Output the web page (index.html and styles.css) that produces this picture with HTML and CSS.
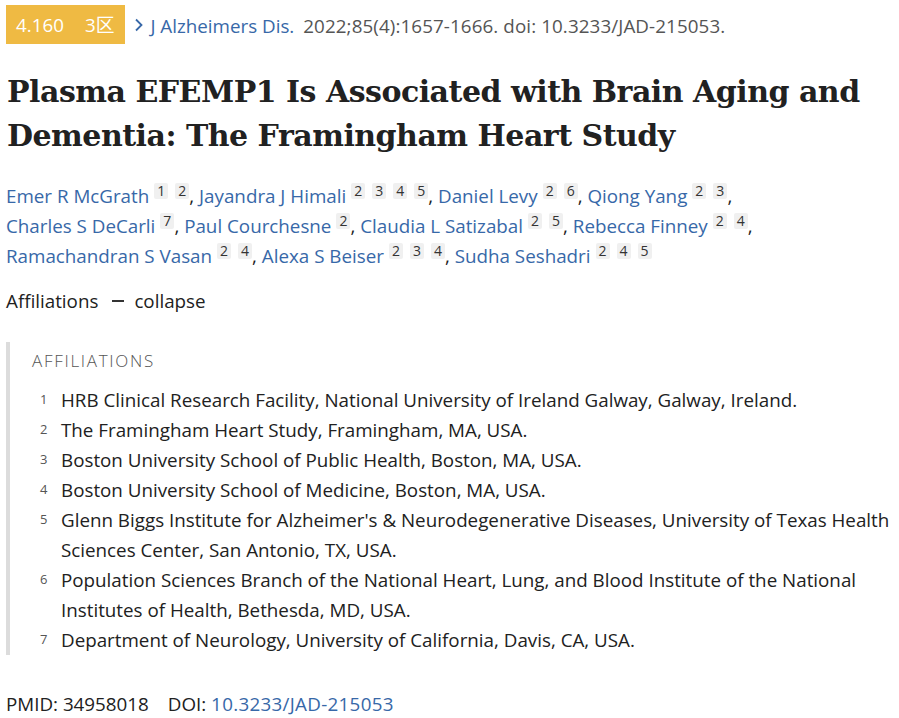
FILE: index.html
```html
<!DOCTYPE html>
<html lang="en">
<head>
<meta charset="utf-8">
<title>Plasma EFEMP1 Is Associated with Brain Aging and Dementia</title>
<link rel="stylesheet" href="styles.css">
</head>
<body>
<main class="article">
  <div class="cite-row">
    <span class="badge"><span>4.160</span><span class="zone">3区</span></span>
    <svg class="chev" width="10" height="16" viewBox="0 0 10 16"><path d="M2 2.5 L7.5 8 L2 13.5" fill="none" stroke="#3768a8" stroke-width="1.8"/></svg>
    <span class="journal">J Alzheimers Dis.</span>
    <span class="cite-meta">2022;85(4):1657-1666. doi: 10.3233/JAD-215053.</span>
  </div>

  <h1 class="title">Plasma EFEMP1 Is Associated with Brain Aging and Dementia: The Framingham Heart Study</h1>

  <div class="authors">
    <span class="author"><a class="name">Emer R McGrath</a><span class="ref">1</span><span class="ref">2</span>, </span>
    <span class="author"><a class="name">Jayandra J Himali</a><span class="ref">2</span><span class="ref">3</span><span class="ref">4</span><span class="ref">5</span>, </span>
    <span class="author"><a class="name">Daniel Levy</a><span class="ref">2</span><span class="ref">6</span>, </span>
    <span class="author"><a class="name">Qiong Yang</a><span class="ref">2</span><span class="ref">3</span>, </span>
    <span class="author"><a class="name">Charles S DeCarli</a><span class="ref">7</span>, </span>
    <span class="author"><a class="name">Paul Courchesne</a><span class="ref">2</span>, </span>
    <span class="author"><a class="name">Claudia L Satizabal</a><span class="ref">2</span><span class="ref">5</span>, </span>
    <span class="author"><a class="name">Rebecca Finney</a><span class="ref">2</span><span class="ref">4</span>, </span>
    <span class="author"><a class="name">Ramachandran S Vasan</a><span class="ref">2</span><span class="ref">4</span>, </span>
    <span class="author"><a class="name">Alexa S Beiser</a><span class="ref">2</span><span class="ref">3</span><span class="ref">4</span>, </span>
    <span class="author"><a class="name">Sudha Seshadri</a><span class="ref">2</span><span class="ref">4</span><span class="ref">5</span></span>
  </div>

  <div class="toggle">
    <span>Affiliations</span>
    <span class="dash"></span>
    <span>collapse</span>
  </div>

  <section class="affiliations">
    <h3 class="aff-head">AFFILIATIONS</h3>
    <ul class="aff-list">
      <li><span class="num">1</span><span class="aff-text">HRB Clinical Research Facility, National University of Ireland Galway, Galway, Ireland.</span></li>
      <li><span class="num">2</span><span class="aff-text">The Framingham Heart Study, Framingham, MA, USA.</span></li>
      <li><span class="num">3</span><span class="aff-text">Boston University School of Public Health, Boston, MA, USA.</span></li>
      <li><span class="num">4</span><span class="aff-text">Boston University School of Medicine, Boston, MA, USA.</span></li>
      <li><span class="num">5</span><span class="aff-text">Glenn Biggs Institute for Alzheimer's &amp; Neurodegenerative Diseases, University of Texas Health Sciences Center, San Antonio, TX, USA.</span></li>
      <li><span class="num">6</span><span class="aff-text">Population Sciences Branch of the National Heart, Lung, and Blood Institute of the National Institutes of Health, Bethesda, MD, USA.</span></li>
      <li><span class="num">7</span><span class="aff-text">Department of Neurology, University of California, Davis, CA, USA.</span></li>
    </ul>
  </section>

  <div class="ids">
    <span class="pmid">PMID: 34958018</span>
    <span>DOI: <a class="doi">10.3233/JAD-215053</a></span>
  </div>
</main>
</body>
</html>
```
FILE: styles.css
```css
html, body {
  margin: 0;
  padding: 0;
  background: #fff;
}
body {
  font-family: "Open Sans", "Noto Sans", "Noto Sans CJK SC", sans-serif;
  font-size: 18.8px;
  line-height: 30px;
  color: #212121;
}
.article {
  padding-left: 6px;
}
.cite-row {
  display: flex;
  align-items: center;
  padding-top: 5px;
  white-space: nowrap;
}
.badge {
  display: flex;
  gap: 21px;
  background: #efba43;
  color: #fff;
  height: 39px;
  line-height: 40px;
  padding: 0 11px 0 10px;
}
.zone {
  font-family: "Open Sans", "Noto Sans CJK SC", sans-serif;
}
.chev {
  margin-left: 9px;
  margin-right: 6px;
}
.journal {
  color: #3768a8;
  line-height: 32px;
  padding-top: 2px;
}
.cite-meta {
  color: #555;
  margin-left: 9px;
  letter-spacing: 0.1px;
  line-height: 32px;
  padding-top: 2px;
}
.title {
  margin: 26px 0 0;
  font-family: "DejaVu Serif", serif;
  font-weight: bold;
  font-size: 30px;
  letter-spacing: -0.5px;
  line-height: 44px;
  color: #212121;
  padding-left: 1px;
}
.authors {
  margin-top: 23px;
  line-height: 30px;
}
.author {
  white-space: nowrap;
}
.name {
  color: #3768a8;
  text-decoration: none;
}
.ref {
  display: inline-block;
  font-size: 14px;
  line-height: 16px;
  padding: 0 3px;
  background: #f0f0f0;
  color: #333;
  border-radius: 2px;
  vertical-align: 7px;
  margin-left: 5px;
}
.ref + .ref {
  margin-left: 7px;
}
.toggle {
  margin-top: 15px;
  display: flex;
  align-items: center;
}
.dash {
  display: inline-block;
  width: 12px;
  height: 2px;
  background: #333;
  margin: 0 10px 0 14px;
}
.affiliations {
  margin-top: 26px;
  border-left: 4px solid #dcdcdc;
  padding: 7px 0 0 22px;
}
.aff-head {
  margin: 0;
  font-size: 17px;
  line-height: 24px;
  font-weight: 300;
  letter-spacing: 1.7px;
  color: #555;
}
.aff-list {
  list-style: none;
  margin: 12px 0 0;
  padding: 0 0 0 8px;
}
.aff-list li {
  display: flex;
  align-items: flex-start;
}
.num {
  flex: 0 0 21px;
  font-size: 13px;
  line-height: 28px;
  color: #555;
}
.aff-text {
  flex: 1;
}
.ids {
  margin-top: 34px;
  display: flex;
  gap: 19px;
}
.doi {
  color: #3768a8;
  text-decoration: none;
  letter-spacing: 0.3px;
}
```
